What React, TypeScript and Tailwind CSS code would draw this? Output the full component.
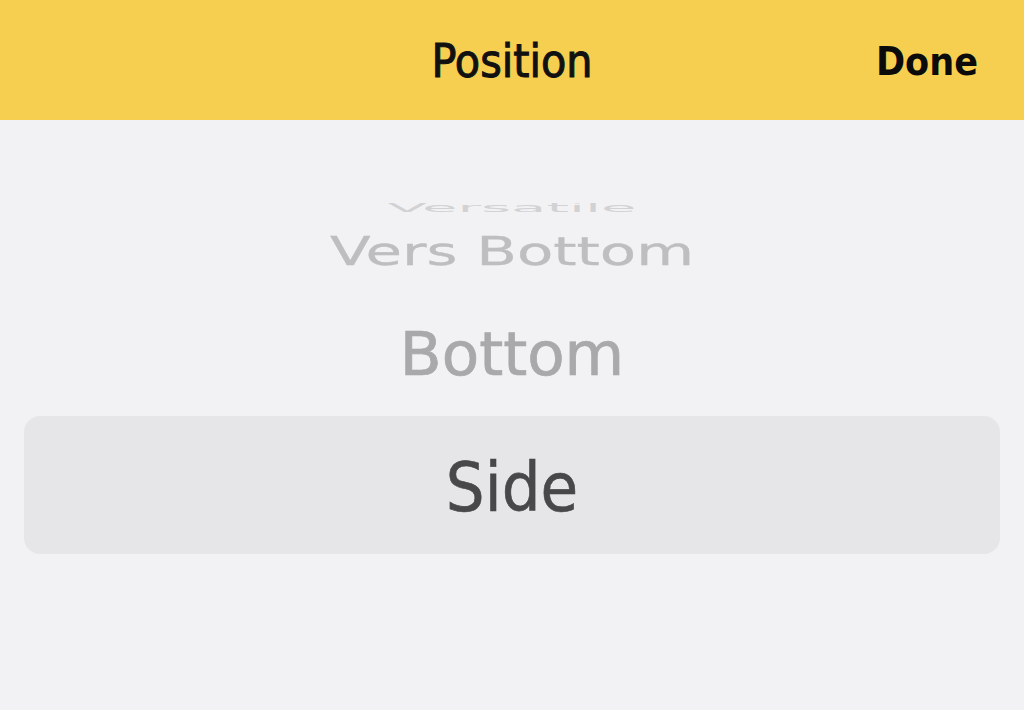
export default function App() {
  return (
    <div className="w-[1024px] h-[710px] overflow-hidden bg-[#f2f2f4] font-['DejaVu_Sans_Condensed','DejaVu_Sans',sans-serif]">
      {/* Header */}
      <div className="h-[120px] bg-[#f6cf50] flex items-center relative">
        <div className="flex-1 text-center text-[46px] leading-none text-[#111] pt-[2px] [-webkit-text-stroke:1px_#111]">Position</div>
        <div className="absolute right-[46px] top-[42px] text-[39px] font-bold leading-none text-[#0b0b0b]">Done</div>
      </div>

      <div className="h-[83px]" />

      {/* Wheel picker */}
      <div className="relative overflow-hidden h-[420px]">
        <div className="h-[16px] -mt-[3px] flex items-center justify-center">
          <span className="text-[64px] leading-none text-[#d2d2d4] scale-y-[0.18] whitespace-nowrap">Versatile</span>
        </div>
        <div className="h-[72px] flex items-center justify-center">
          <span className="text-[66px] leading-none text-[#bebec0] scale-y-[0.58] whitespace-nowrap [-webkit-text-stroke:0.5px_#bebec0]">Vers Bottom</span>
        </div>
        <div className="h-[128px] flex items-center justify-center pt-[4px]">
          <span className="text-[68px] leading-none text-[#a9a9ab] scale-y-[0.9] whitespace-nowrap [-webkit-text-stroke:0.8px_#a9a9ab]">Bottom</span>
        </div>
        <div className="mx-[24px] h-[138px] rounded-[16px] bg-[#e6e6e8] flex items-center justify-center pt-[6px]">
          <span className="text-[68px] leading-none text-[#48484a] whitespace-nowrap [-webkit-text-stroke:0.6px_#48484a]">Side</span>
        </div>
      </div>
    </div>
  );
}
